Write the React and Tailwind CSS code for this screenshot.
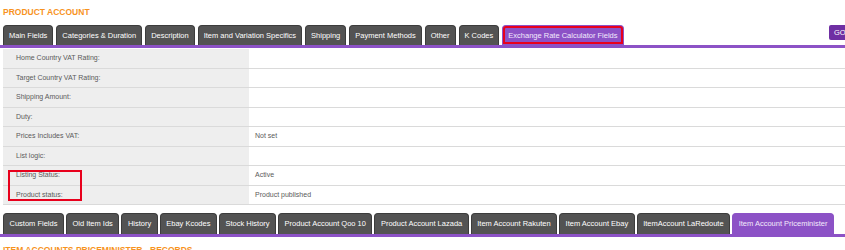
const topTabs = [
  'Main Fields',
  'Categories & Duration',
  'Description',
  'Item and Variation Specifics',
  'Shipping',
  'Payment Methods',
  'Other',
  'K Codes',
];

const bottomTabs = [
  'Custom Fields',
  'Old Item Ids',
  'History',
  'Ebay Kcodes',
  'Stock History',
  'Product Account Qoo 10',
  'Product Account Lazada',
  'Item Account Rakuten',
  'Item Account Ebay',
  'ItemAccount LaRedoute',
];

const rows = [
  ['Home Country VAT Rating:', ''],
  ['Target Country VAT Rating:', ''],
  ['Shipping Amount:', ''],
  ['Duty:', ''],
  ['Prices Includes VAT:', 'Not set'],
  ['List logic:', ''],
  ['Listing Status:', 'Active'],
  ['Product status:', 'Product published'],
];

function Tab({ label, active, boxed, tall }) {
  return (
    <div
      className={`${tall ? 'h-[21px] px-[5.5px]' : 'h-[20px] px-[5px]'} flex items-center rounded-t-[4px] border border-b-0 text-[7.5px] whitespace-nowrap ${
        active
          ? 'bg-[#8c52c6] border-[#8c52c6] text-[#f3eafc]'
          : 'bg-[#535353] border-[#3c3c3c] text-white'
      } ${boxed ? 'outline-2 outline-[#e8001c] -outline-offset-3' : ''}`}
    >
      {label}
    </div>
  );
}

export default function App() {
  return (
    <div className="w-[845px] h-[250px] overflow-hidden bg-white font-['Liberation_Sans',Arial,sans-serif]">
      <div className="pt-[6px] pl-[3px] h-[25px] text-[8.5px] font-bold text-[#f7931e] leading-[12px]">
        PRODUCT ACCOUNT
      </div>

      {/* top tabs */}
      <div className="flex items-start gap-[3px] pl-[3px]">
        {topTabs.map((t) => (
          <Tab key={t} label={t} />
        ))}
        <Tab label="Exchange Rate Calculator Fields" active boxed />
        <button className="ml-auto h-[15px] w-[30px] pl-[5px] text-left rounded-[2px] bg-[#6f2fa3] text-white text-[7.5px] -mr-[14px]">
          GO
        </button>
      </div>
      <div className="h-[3px] bg-[#8c52c6]" />

      {/* fields table */}
      <div className="relative ml-[3px] mt-px">
        {rows.map(([label, value]) => (
          <div key={label} className="flex h-[19.5px] border-b border-[#dadada] text-[7px] text-[#5a5a5a]">
            <div className="w-[246px] bg-[#eeeeee] pl-[13px] flex items-center">{label}</div>
            <div className="flex-1 pl-[6px] flex items-center">{value}</div>
          </div>
        ))}
        <div className="absolute left-[5px] top-[121px] w-[74px] h-[31px] border-2 border-[#e8001c]" />
      </div>

      {/* bottom tabs */}
      <div className="flex items-start gap-[2px] pl-[3px] mt-[8px]">
        {bottomTabs.map((t) => (
          <Tab key={t} label={t} tall />
        ))}
        <Tab label="Item Account Priceminister" active tall />
      </div>
      <div className="h-[3px] bg-[#8c52c6]" />
      <div className="pt-[7px] pl-[3px] text-[8.5px] font-bold text-[#f7931e] leading-[12px]">
        ITEM ACCOUNTS PRICEMINISTER - RECORDS
      </div>
    </div>
  );
}
